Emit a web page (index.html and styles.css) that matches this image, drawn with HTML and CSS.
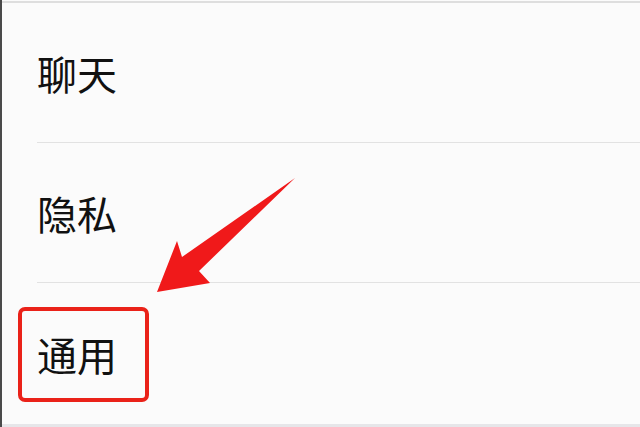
FILE: index.html
```html
<!DOCTYPE html>
<html lang="zh-CN">
<head>
<meta charset="utf-8">
<title>设置</title>
<link rel="stylesheet" href="styles.css">
</head>
<body>
<div class="screen">
  <div class="topline"></div>
  <ul class="menu">
    <li class="item"><span class="label">聊天</span></li>
    <li class="item"><span class="label">隐私</span></li>
    <li class="item last"><span class="label">通用</span></li>
  </ul>
  <div class="bottomband"></div>
  <div class="highlight"></div>
  <svg class="arrow" width="640" height="427" viewBox="0 0 640 427" xmlns="http://www.w3.org/2000/svg">
    <polygon points="295,178 199,271 210,283 157,292 177,241 182,257" fill="#f0191a"/>
  </svg>
</div>
</body>
</html>
```

FILE: styles.css
```css
html, body {
  margin: 0;
  padding: 0;
  background: #fbfbfb;
}

.screen {
  position: relative;
  width: 640px;
  height: 427px;
  overflow: hidden;
  box-sizing: border-box;
  border-left: 2px solid #4a4a4a;
  background: #fbfbfb;
  display: flex;
  flex-direction: column;
  font-family: "Noto Sans CJK SC", "Noto Sans", sans-serif;
}

.topline {
  height: 3px;
  box-sizing: border-box;
  border-top: 1px solid #fbfbfb;
  border-bottom: 2px solid #dedede;
}

.menu {
  list-style: none;
  margin: 0;
  padding: 0 0 0 35px;
  flex: 1;
  display: flex;
  flex-direction: column;
}

.item {
  height: 140px;
  box-sizing: border-box;
  border-bottom: 1px solid #e2e2e2;
  display: flex;
  align-items: center;
}

.item.last {
  border-bottom: none;
  height: 141px;
}

.label {
  font-size: 40px;
  line-height: 40px;
  color: #111111;
  letter-spacing: 0;
}

.bottomband {
  height: 3px;
  background: #e6e6e9;
}

.highlight {
  position: absolute;
  left: 16px;
  top: 307px;
  width: 131px;
  height: 95px;
  box-sizing: border-box;
  border: 4px solid #ea2219;
  border-radius: 7px;
}

.arrow {
  position: absolute;
  left: -2px;
  top: 0;
  pointer-events: none;
}
```
